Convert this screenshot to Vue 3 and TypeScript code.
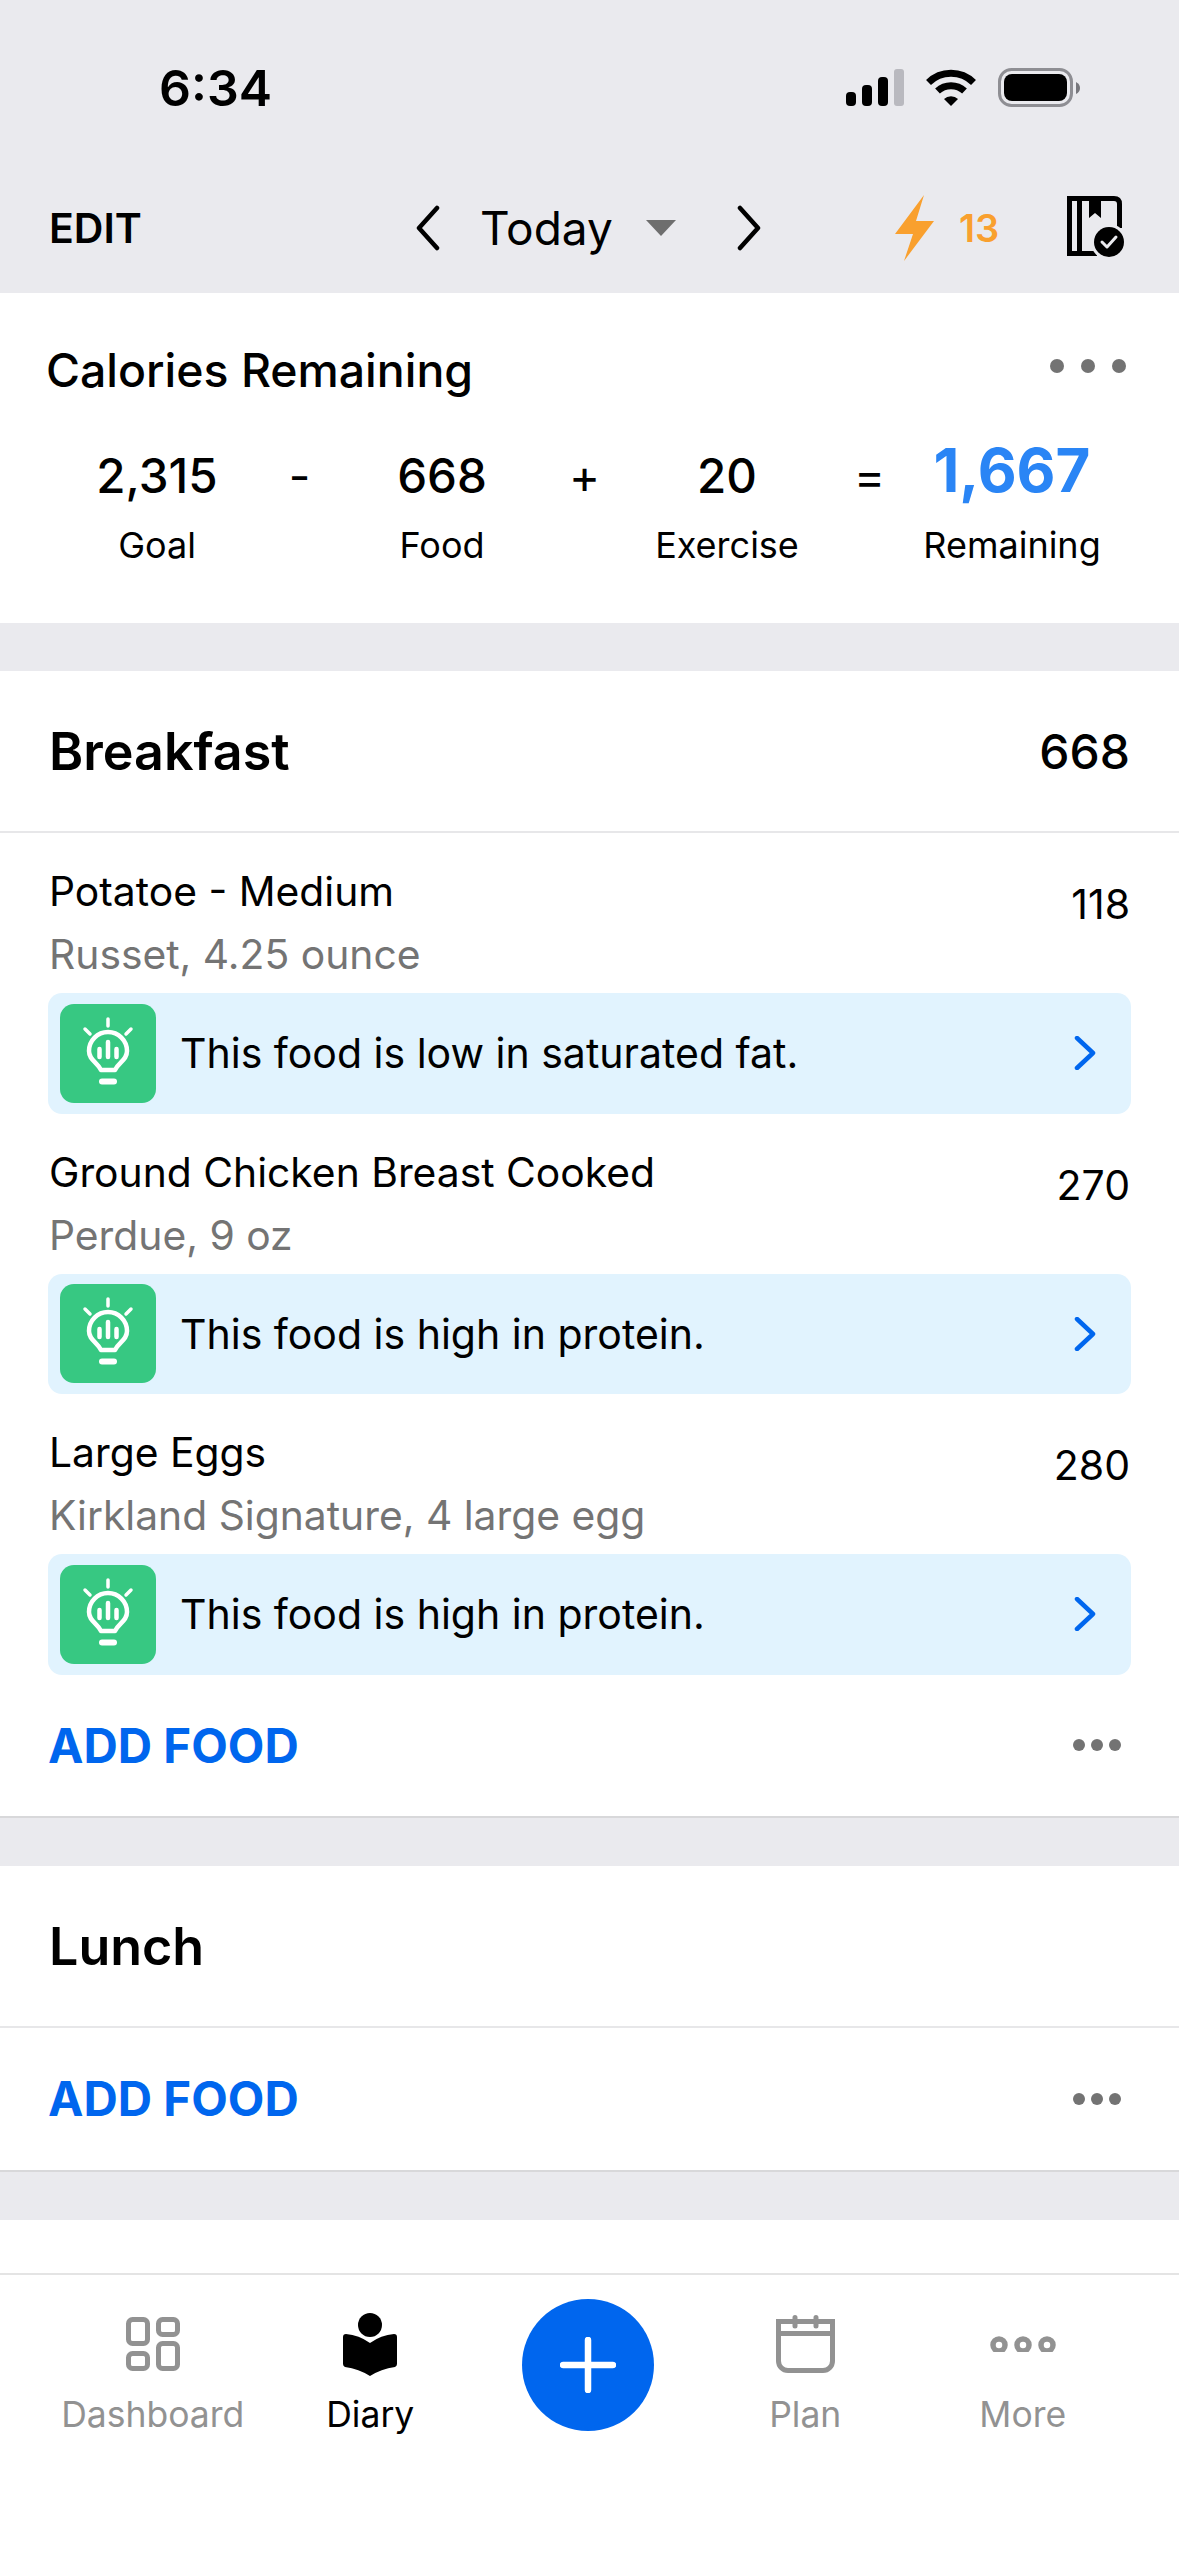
<script setup lang="ts">
interface Food { name: string; detail: string; cals: number; tip: string }

const stats = [
  { value: '2,315', label: 'Goal', op: '-' },
  { value: '668', label: 'Food', op: '+' },
  { value: '20', label: 'Exercise', op: '=' },
];
const foods: Food[] = [
  { name: 'Potatoe - Medium', detail: 'Russet, 4.25 ounce', cals: 118, tip: 'This food is low in saturated fat.' },
  { name: 'Ground Chicken Breast Cooked', detail: 'Perdue, 9 oz', cals: 270, tip: 'This food is high in protein.' },
  { name: 'Large Eggs', detail: 'Kirkland Signature, 4 large egg', cals: 280, tip: 'This food is high in protein.' },
];
</script>

<template>
  <div class="phone">
    <div class="status">
      <span class="time">6:34</span>
      <div class="status-icons">
        <svg width="58" height="37" viewBox="0 0 58 37">
          <rect x="0" y="23" width="10" height="14" rx="4" fill="#000" />
          <rect x="16" y="16" width="10" height="21" rx="4" fill="#000" />
          <rect x="32" y="8" width="10" height="29" rx="4" fill="#000" />
          <rect x="48" y="0" width="10" height="37" rx="3" fill="#b9b9bf" />
        </svg>
        <svg class="wifi" width="52" height="38" viewBox="0 0 52 38">
          <path d="M3.5 13.5 A32 32 0 0 1 48.5 13.5" fill="none" stroke="#000" stroke-width="7" />
          <path d="M12.5 22 A20 20 0 0 1 39.5 22" fill="none" stroke="#000" stroke-width="7" />
          <path d="M26 37 L19 30 A10 10 0 0 1 33 30 Z" fill="#000" />
        </svg>
        <svg class="battery" width="83" height="40" viewBox="0 0 83 40">
          <rect x="1.5" y="1.5" width="72" height="36" rx="12" fill="none" stroke="#8e8e93" stroke-width="3" />
          <rect x="6" y="6" width="63" height="27" rx="8" fill="#000" />
          <path d="M78 14 Q82 16 82 20 Q82 24 78 26 Z" fill="#77777c" />
        </svg>
      </div>
    </div>

    <div class="nav">
      <span class="edit">EDIT</span>
      <svg class="chev-left" width="25" height="46" viewBox="0 0 25 46">
        <path d="M22 3 L4 23 L22 43" fill="none" stroke="#000" stroke-width="4.5" stroke-linecap="round" stroke-linejoin="round" />
      </svg>
      <span class="today">Today</span>
      <span class="caret"></span>
      <svg class="chev-right" width="25" height="46" viewBox="0 0 25 46">
        <path d="M3 3 L21 23 L3 43" fill="none" stroke="#000" stroke-width="4.5" stroke-linecap="round" stroke-linejoin="round" />
      </svg>
      <svg class="bolt" width="39" height="66" viewBox="0 0 39 66">
        <path d="M29 0 L0 39 L18 39 L9 66 L39 26 L21 26 Z" fill="#f9a02e" />
      </svg>
      <span class="streak">13</span>
      <svg class="book" width="58" height="62" viewBox="0 0 58 62">
        <path d="M0 0 H47 Q55 0 55 8 V32 H50 V8 Q50 5 47 5 H34 V22 L28 17 L22 22 V5 H15 V55 H30 V60 H0 Z M5 5 V55 H10 V5 Z" fill="#000" fill-rule="evenodd" />
        <circle cx="42" cy="46" r="18" fill="#eaeaee" />
        <circle cx="42" cy="46" r="15" fill="#000" />
        <path d="M35 46 L40 51 L49 41" fill="none" stroke="#eaeaee" stroke-width="3" stroke-linecap="round" stroke-linejoin="round" />
      </svg>
    </div>

    <div class="content">
      <section class="card summary">
        <div class="summary-head">
          <span class="summary-title">Calories Remaining</span>
          <div class="dots big"><i></i><i></i><i></i></div>
        </div>
        <div class="stats">
          <template v-for="s in stats" :key="s.label">
            <div class="stat">
              <span class="stat-value">{{ s.value }}</span>
              <span class="stat-label">{{ s.label }}</span>
            </div>
            <span class="op">{{ s.op }}</span>
          </template>
          <div class="stat">
            <span class="stat-value remaining">1,667</span>
            <span class="stat-label">Remaining</span>
          </div>
        </div>
      </section>

      <section class="card meal">
        <div class="meal-head">
          <span class="meal-title">Breakfast</span>
          <span class="meal-cals">668</span>
        </div>
        <div v-for="f in foods" :key="f.name" class="food">
          <div class="food-top">
            <div>
              <div class="food-name">{{ f.name }}</div>
              <div class="food-detail">{{ f.detail }}</div>
            </div>
            <span class="food-cals">{{ f.cals }}</span>
          </div>
          <div class="tip">
            <div class="tip-icon">
              <svg width="96" height="99" viewBox="0 0 96 99">
                <g fill="none" stroke="#fff" stroke-linecap="round" stroke-width="4.5">
                  <path d="M48 15 V22 M25 25 L30 30 M71 25 L66 30" stroke-width="3.5" />
                  <path d="M41 66 C37 58 29 56 29 47 A19 19 0 0 1 67 47 C67 56 59 58 55 66 Z" stroke-linejoin="round" />
                  <path d="M39.5 45 V53 M48 38 V53 M56.5 45 V53" />
                  <path d="M42 77.5 H54" stroke-width="6" />
                </g>
              </svg>
            </div>
            <span class="tip-text">{{ f.tip }}</span>
            <svg class="tip-chev" width="22" height="34" viewBox="0 0 22 34">
              <path d="M3 2 L19 17 L3 32" fill="none" stroke="#0066ee" stroke-width="4.5" stroke-linecap="round" stroke-linejoin="round" />
            </svg>
          </div>
        </div>
        <div class="add-row">
          <span class="add">ADD FOOD</span>
          <div class="dots"><i></i><i></i><i></i></div>
        </div>
      </section>

      <section class="card meal">
        <div class="meal-head">
          <span class="meal-title">Lunch</span>
        </div>
        <div class="add-row">
          <span class="add">ADD FOOD</span>
          <div class="dots"><i></i><i></i><i></i></div>
        </div>
      </section>

      <section class="card rest"></section>
    </div>

    <nav class="tabs">
      <div class="tab">
        <div class="tab-icon">
          <svg width="54" height="54" viewBox="0 0 54 54" fill="none" stroke="#929292" stroke-width="5">
            <rect x="2.5" y="2.5" width="19" height="24" rx="4" />
            <rect x="32.5" y="2.5" width="19" height="15" rx="4" />
            <rect x="2.5" y="36.5" width="19" height="15" rx="4" />
            <rect x="32.5" y="26.5" width="19" height="25" rx="4" />
          </svg>
        </div>
        <span>Dashboard</span>
      </div>
      <div class="tab active">
        <div class="tab-icon">
          <svg width="54" height="63" viewBox="0 0 54 63" fill="#000">
            <circle cx="27" cy="12" r="12" />
            <path d="M3 21 Q16 22 27 30 Q38 22 51 21 Q54 21 54 24 V51 Q54 53 52 54 Q38 56 27 63 Q16 56 2 54 Q0 53 0 51 V24 Q0 21 3 21 Z" />
          </svg>
        </div>
        <span>Diary</span>
      </div>
      <div class="tab">
        <div class="plus">
          <svg width="56" height="56" viewBox="0 0 56 56">
            <path d="M3 28 H53 M28 3 V53" stroke="#fff" stroke-width="6.5" stroke-linecap="round" />
          </svg>
        </div>
      </div>
      <div class="tab">
        <div class="tab-icon">
          <svg width="59" height="58" viewBox="0 0 59 58" fill="none" stroke="#929292" stroke-width="5">
            <path d="M2.5 6.5 H56.5 V46 A9.5 9.5 0 0 1 47 55.5 H12 A9.5 9.5 0 0 1 2.5 46 Z" />
            <path d="M2.5 18.5 H56.5" />
            <path d="M19 2.5 V11 M40 2.5 V11" stroke-linecap="round" />
          </svg>
        </div>
        <span>Plan</span>
      </div>
      <div class="tab">
        <div class="tab-icon">
          <svg width="66" height="16" viewBox="0 0 66 16" fill="none" stroke="#929292" stroke-width="5.5">
            <circle cx="9" cy="9" r="6" />
            <circle cx="33" cy="9" r="6" />
            <circle cx="57" cy="9" r="6" />
          </svg>
        </div>
        <span>More</span>
      </div>
    </nav>
  </div>
</template>

<style>
html, body { margin: 0; padding: 0; background: #fff; }
</style>

<style scoped>
.phone {
  width: 1179px; height: 2556px; display: flex; flex-direction: column; overflow: hidden;
  background: #eaeaee; color: #000; font-family: Inter, "Liberation Sans", sans-serif;
}
.status { height: 175px; flex: none; display: flex; align-items: center; justify-content: space-between; padding: 0 98px 0 159px; }
.time { font-size: 50px; font-weight: 600; }
.status-icons { display: flex; align-items: center; }
.wifi { margin-left: 21px; }
.battery { margin-left: 21px; }

.nav { height: 118px; flex: none; box-sizing: border-box; display: flex; align-items: center; padding: 0 54px 12px 49px; }
.edit { font-size: 41px; font-weight: 600; width: 366px; flex: none; }
.today { font-size: 46px; margin-left: 40px; width: 132px; flex: none; white-space: nowrap; }
.caret { width: 0; height: 0; margin-left: 34px; border-left: 15px solid transparent; border-right: 15px solid transparent; border-top: 16px solid #6e6e6e; }
.chev-right { margin-left: 61px; }
.bolt { margin-left: 133px; flex: none; }
.streak { font-size: 38px; font-weight: 600; color: #f9a02e; margin-left: 25px; width: 108px; flex: none; }
.book { margin-top: -2px; flex: none; }

.content { flex: 1; min-height: 0; display: flex; flex-direction: column; gap: 48px; }
.card { background: #fff; }
.summary { height: 330px; flex: none; }
.summary-head { display: flex; justify-content: space-between; align-items: center; padding: 44px 53px 0 46px; height: 66px; }
.summary-title { font-size: 46.4px; font-weight: 500; }
.dots { display: flex; gap: 6px; }
.dots i { width: 12px; height: 12px; border-radius: 50%; background: #737373; }
.dots.big { gap: 17px; margin-top: -8px; }
.dots.big i { width: 14px; height: 14px; }
.add-row .dots { margin-right: 9px; }

.stats { display: flex; align-items: flex-start; padding: 38px 0 0 62px; }
.stat { width: 190px; display: flex; flex-direction: column; align-items: center; }
.stat-value { font-size: 47.5px; font-weight: 450; line-height: 70px; height: 70px; }
.stat-value.remaining { font-size: 60px; font-weight: 700; color: #2a85f5; line-height: 58px; }
.stat-label { font-size: 36px; line-height: 68px; }
.op { width: 95px; text-align: center; font-size: 47px; line-height: 70px; }

.meal { flex: none; }
.meal-head { height: 162px; box-sizing: border-box; border-bottom: 2px solid #e7e7e9; display: flex; align-items: center; justify-content: space-between; padding: 0 49px; }
.meal-title { font-size: 52px; font-weight: 600; }
.meal-cals { font-size: 48px; font-weight: 500; }

.food { padding: 0 48px; height: 280.5px; box-sizing: border-box; display: flex; flex-direction: column; }
.food-top { display: flex; justify-content: space-between; height: 160px; flex: none; padding: 27px 1px 0 1px; box-sizing: border-box; }
.food-name { font-size: 40.8px; line-height: 62px; }
.food-detail { font-size: 40.8px; line-height: 64px; color: #747474; }
.food-cals { font-size: 41px; line-height: 88px; }
.tip { flex: 1; background: #e1f3fe; border-radius: 14px; display: flex; align-items: center; padding: 0 35px 0 12px; }
.tip-icon { width: 96px; height: 99px; border-radius: 14px; background: #37c882; flex: none; display: flex; }
.tip-text { font-size: 41px; margin-left: 24px; flex: 1; }

.add-row { height: 143.5px; box-sizing: border-box; display: flex; align-items: center; justify-content: space-between; padding: 0 49px 0 48px; border-bottom: 2px solid #d8d8da; }
.add { font-size: 47.5px; font-weight: 700; color: #0066ee; }
.rest { flex: 1; }

.tabs { height: 283px; flex: none; box-sizing: border-box; background: #fff; border-top: 2px solid #e4e4e4; display: flex; padding: 24px 44px 0; }
.tab { width: 217.5px; display: flex; flex-direction: column; align-items: center; font-size: 35.5px; color: #929292; }
.tab.active { color: #000; }
.tab-icon { height: 90px; display: flex; align-items: center; justify-content: center; }
.tab span { line-height: 52px; }
.plus { width: 132px; height: 132px; border-radius: 50%; background: #0066ee; display: flex; align-items: center; justify-content: center; }
</style>
